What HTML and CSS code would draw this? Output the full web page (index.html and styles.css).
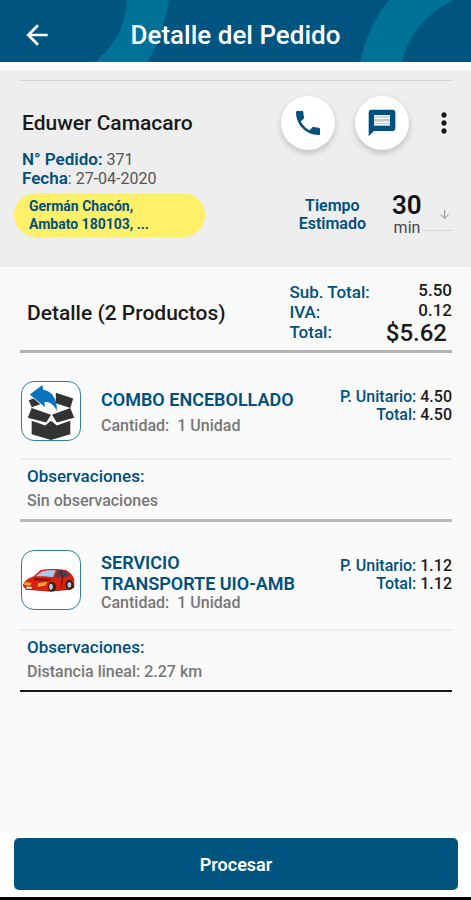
FILE: index.html
```html
<!DOCTYPE html>
<html lang="es">
<head>
  <meta charset="UTF-8" />
  <meta name="viewport" content="width=device-width, initial-scale=1" />
  <title>Detalle del Pedido</title>
  <link rel="stylesheet" href="styles.css">
</head>
<body>

  <header class="topbar">
    <svg class="topbar-art" viewBox="0 0 471 62" preserveAspectRatio="none" aria-hidden="true">
      <path d="M127 0 Q126 36 95 62 H148 Q164 32 169 0 Z" />
      <path d="M389 0 Q368 26 360 62 H402 Q411 22 453 0 Z" />
    </svg>
    <button class="icon-btn back" aria-label="Volver">
      <svg viewBox="0 0 24 24"><path d="M20 11H7.83l5.59-5.59L12 4l-8 8 8 8 1.41-1.41L7.83 13H20v-2z" /></svg>
    </button>
    <h1>Detalle del Pedido</h1>
  </header>

  <section class="order">
    <div class="order-top">
      <h2>Eduwer Camacaro</h2>
      <button class="round-btn" aria-label="Llamar">
        <svg viewBox="0 0 24 24"><path d="M6.62 10.79c1.44 2.83 3.76 5.14 6.59 6.59l2.2-2.2c.27-.27.67-.36 1.02-.24 1.12.37 2.33.57 3.57.57.55 0 1 .45 1 1V20c0 .55-.45 1-1 1-9.39 0-17-7.61-17-17 0-.55.45-1 1-1h3.5c.55 0 1 .45 1 1 0 1.25.2 2.45.57 3.57.11.35.03.74-.25 1.02l-2.2 2.2z" /></svg>
      </button>
      <button class="round-btn" aria-label="Mensaje">
        <svg viewBox="0 0 24 24">
          <path d="M20 2H4c-1.1 0-1.99.9-1.99 2L2 22l4-4h14c1.1 0 2-.9 2-2V4c0-1.1-.9-2-2-2z" />
          <path class="msg-paper" d="M6 6h12v8H6z" />
          <path class="msg-lines" d="M6 7h12v1H6zM6 9h12v2H6zM6 12h12v1H6z" />
        </svg>
      </button>
      <button class="icon-btn more" aria-label="Más opciones">
        <svg viewBox="0 0 24 24"><path d="M12 8c1.100 0 2-.9 2-2s-.9-2-2-2-2 .9-2 2 .9 2 2 2zm0 2c-1.100 0-2 .9-2 2s.9 2 2 2 2-.9 2-2-.9-2-2-2zm0 6c-1.100 0-2 .9-2 2s.9 2 2 2 2-.9 2-2-.9-2-2-2z" /></svg>
      </button>
    </div>

    <div class="order-bottom">
      <div class="order-info">
        <p><strong>N° Pedido:</strong> 371</p>
        <p><strong>Fecha</strong>: 27-04-2020</p>
        <address>Germán Chacón,<br>Ambato 180103, ...</address>
      </div>
      <div class="time">
        <label for="minutes">Tiempo<br>Estimado</label>
        <div class="time-value">
          <select id="minutes">
            <option>30</option>
            <option>45</option>
            <option>60</option>
          </select>
          <span>min</span>
        </div>
        <svg class="time-arrow" viewBox="0 0 30 24" aria-hidden="true"><path d="M23 3v9M19 8l4 4 4-4" /></svg>
      </div>
    </div>
  </section>

  <main>
    <section class="summary">
      <h2>Detalle (2 Productos)</h2>
      <dl>
        <dt>Sub. Total:</dt><dd>5.50</dd>
        <dt>IVA:</dt><dd>0.12</dd>
        <dt>Total:</dt><dd class="grand">$5.62</dd>
      </dl>
    </section>

    <article class="product">
      <div class="product-row">
        <svg class="thumb" viewBox="0 0 60 60" aria-hidden="true">
          <g fill="#333">
            <path d="M35 11l18 6-3 10-15-5z" />
            <path d="M7 19l5-2 7 6-9 3z" />
            <path d="M10 27l20 7-5 8-19-5z" />
            <path d="M50 27l-19 7 5 8 18-5z" />
            <path d="M10 40l14 5 6-5 6 5 14-5v14l-20 6-20-6z" />
          </g>
          <path fill="#0873be" d="M8 13L21 3l1 5c8 1 15 9 14 22-3-7-8-10-13-9l1 5z" />
        </svg>
        <div class="product-name">
          <h3>COMBO ENCEBOLLADO</h3>
          <p>Cantidad: &nbsp;1 Unidad</p>
        </div>
        <div class="product-price">
          <p><strong>P. Unitario:</strong> 4.50</p>
          <p><strong>Total:</strong> 4.50</p>
        </div>
      </div>
      <div class="notes">
        <h4>Observaciones:</h4>
        <p>Sin observaciones</p>
      </div>
    </article>

    <article class="product">
      <div class="product-row">
        <svg class="thumb" viewBox="0 0 60 60" aria-hidden="true">
          <path fill="#7d1710" d="M3 38l24 3 24-4 3-3v4l-4 2-20 2-26-2z" />
          <path fill="#d8210f" d="M1 35c2-5 6-7 11-9l7-6c6-2 20-2 27 0 4 2 6 5 8 9v6l-6 4-20 3-24-3c-2-1-3-2-3-4z" />
          <path fill="#a4cdf2" d="M14 26l7-5c4-1 9-1 14-1l-3 7c-6-1-12-1-18-1z" />
          <path fill="#31495f" d="M37 20c4 0 7 0 9 2l4 4-15 1z" />
          <path fill="#8b100c" d="M41 20l2 7-2 11h-1l1-11-2-7zM13 28l19 1-7 2-13-1z" />
          <path fill="#ffac2b" d="M3 32l7 1-2 3-6-1zM17 33l9-1-2 4-8 1z" />
          <path fill="#ffffff" d="M4 37h6v2H5z" />
          <ellipse cx="31" cy="37" rx="4" ry="5" fill="#26201f" />
          <ellipse cx="30" cy="37" rx="2" ry="3" fill="#c4c4c4" />
          <ellipse cx="49" cy="35" rx="4" ry="5" fill="#26201f" />
          <ellipse cx="49" cy="35" rx="2" ry="3" fill="#c4c4c4" />
        </svg>
        <div class="product-name">
          <h3>SERVICIO<br>TRANSPORTE UIO-AMB</h3>
          <p>Cantidad: &nbsp;1 Unidad</p>
        </div>
        <div class="product-price">
          <p><strong>P. Unitario:</strong> 1.12</p>
          <p><strong>Total:</strong> 1.12</p>
        </div>
      </div>
      <div class="notes">
        <h4>Observaciones:</h4>
        <p>Distancia lineal: 2.27 km</p>
      </div>
    </article>
  </main>

  <footer>
    <button class="submit">Procesar</button>
  </footer>

</body>
</html>
```
FILE: styles.css
```css
* {
  box-sizing: border-box;
}

body {
  margin: 0;
  font-family: Roboto, sans-serif;
  font-size: 16px;
  background: #fafafa;
  color: #1a1a1a;
  display: flex;
  flex-direction: column;
  min-height: 100vh;
}

h1, h2, h3, h4, p, dl, dd {
  margin: 0;
  font-weight: 500;
}

button, select {
  font-family: inherit;
  border: none;
  padding: 0;
  cursor: pointer;
}

strong {
  font-weight: 600;
  color: #00507d;
}

svg {
  display: block;
}

/* header */
.topbar {
  position: relative;
  height: 62px;
  padding: 8px 21px 0;
  display: grid;
  grid-template-columns: 32px 1fr 32px;
  align-items: center;
  background: #005580;
  color: #fff;
}

.topbar-art {
  position: absolute;
  inset: 0;
  width: 100%;
  height: 100%;
  fill: #007298;
}

.topbar h1 {
  position: relative;
  text-align: center;
  font-size: 26px;
  line-height: 32px;
}

.icon-btn {
  position: relative;
  background: none;
  color: inherit;
}

.icon-btn svg, .round-btn svg {
  width: 32px;
  height: 32px;
  fill: currentColor;
}

/* order data */
.order {
  padding: 10px 19px 30px 20px;
  background: #eee;
  border-top: 8px solid #fbfbfb;
}

.order-top {
  display: flex;
  align-items: center;
  gap: 20px;
  padding: 15px 0 0 2px;
  border-top: 1px solid #d4d6d6;
}

.order-top h2 {
  flex: 1;
  font-size: 21px;
}

.round-btn {
  width: 54px;
  height: 54px;
  display: grid;
  place-items: center;
  border-radius: 50%;
  background: #fff;
  color: #00507d;
  box-shadow: 0 3px 6px rgba(0, 0, 0, 0.2);
}

.msg-paper {
  fill: #fff;
}

.msg-lines {
  fill: #b9d0d2;
}

.more {
  margin: 0 -8px 0 -1px;
}

.order-bottom {
  display: flex;
  justify-content: space-between;
  align-items: flex-start;
}

.order-info p {
  padding-left: 2px;
  font-size: 16px;
  line-height: 19px;
  font-weight: 400;
  color: #555;
}

.order-info strong {
  font-size: 17px;
}

.order-info address {
  width: 191px;
  margin: 5px 0 0 -6px;
  padding: 4px 15px;
  border-radius: 22px;
  background: #fff06a;
  color: #00507d;
  font-size: 14px;
  line-height: 18px;
  font-style: normal;
  font-weight: 700;
}

.time {
  display: flex;
  align-items: flex-end;
  padding-top: 41px;
}

.time label {
  margin: 0 26px 4px 0;
  text-align: center;
  font-size: 16px;
  line-height: 18px;
  font-weight: 600;
  color: #00507d;
}

.time-value {
  display: flex;
  flex-direction: column;
  align-items: center;
  font-size: 16px;
  line-height: 18px;
  color: #444;
}

.time-value select {
  appearance: none;
  background: none;
  color: #111;
  font-size: 26px;
  line-height: 28px;
  font-weight: 600;
}

.time-arrow {
  width: 30px;
  height: 24px;
  margin-bottom: 6px;
  border-bottom: 1px solid #d4d6d6;
  fill: none;
  stroke: #888;
}

/* detail */
main {
  flex: 1;
  padding: 0 19px 0 20px;
}

.summary {
  display: flex;
  justify-content: space-between;
  align-items: center;
  padding: 13px 0 4px 7px;
  border-bottom: 3px solid #b3b3b3;
}

.summary h2 {
  font-size: 21px;
}

.summary dl {
  display: grid;
  grid-template-columns: auto auto;
  column-gap: 16px;
  font-size: 17px;
  line-height: 20px;
}

.summary dt {
  padding-top: 4px;
  line-height: 16px;
  font-weight: 500;
  color: #00507d;
}

.summary dd {
  text-align: right;
}

.summary .grand {
  padding-right: 5px;
  font-size: 24px;
  line-height: 26px;
}

.product {
  border-bottom: 3px solid #b9b9b9;
}

.product:last-child {
  border-bottom: 2px solid #1a1a1a;
}

.product-row {
  display: flex;
  padding: 28px 0 17px 1px;
}

.thumb {
  flex: none;
  width: 60px;
  height: 60px;
  margin-right: 20px;
  border: 1px solid #2f7f9f;
  border-radius: 13px;
  background: #fff;
}

.product-name {
  flex: 1;
  display: flex;
  flex-direction: column;
  justify-content: space-evenly;
  padding-top: 2px;
}

.product-name h3 {
  font-size: 18px;
  line-height: 21px;
  font-weight: 600;
  color: #00507d;
}

.product-name p, .notes p {
  color: #777;
  font-size: 16px;
  line-height: 18px;
}

.product-price {
  padding-top: 7px;
  text-align: right;
  font-size: 16px;
  line-height: 18px;
}

.product-price strong {
  font-weight: 500;
}

.notes {
  padding: 7px 7px 9px;
  border-top: 2px solid #eee;
}

.notes h4 {
  margin-bottom: 7px;
  font-size: 17px;
  line-height: 18px;
  color: #00507d;
}

/* footer */
footer {
  padding: 6px 13px 7px 14px;
  background: #fff;
  border-bottom: 3px solid #000;
}

.submit {
  width: 100%;
  height: 52px;
  border-radius: 5px;
  background: #005580;
  color: #fff;
  font-size: 18px;
  font-weight: 600;
}
```
